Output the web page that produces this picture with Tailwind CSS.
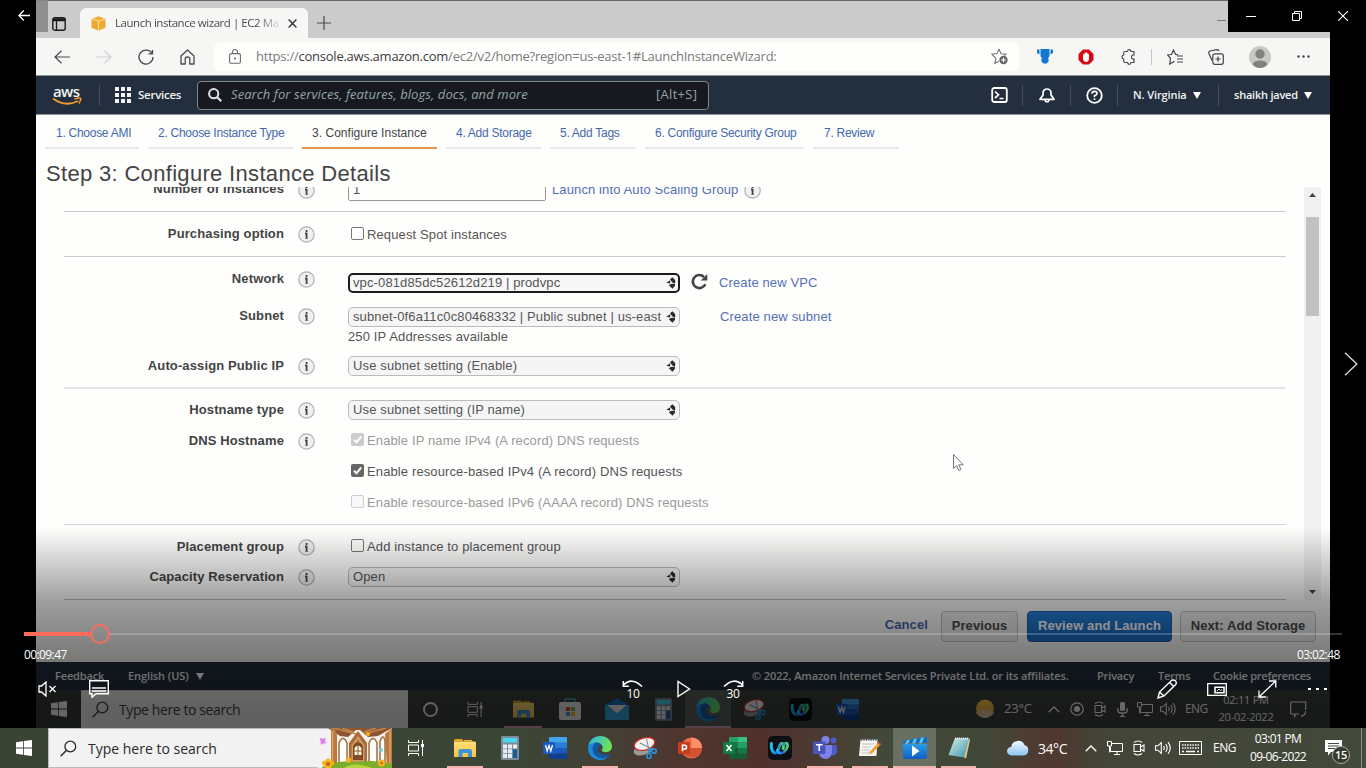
<!DOCTYPE html>
<html lang="en">
<head>
<meta charset="utf-8">
<title>Media player</title>
<script src="https://cdn.jsdelivr.net/npm/@tailwindcss/browser@4"></script>
</head>
<body class="w-[1366px] h-[768px] overflow-hidden bg-black font-['Open_Sans',sans-serif]">
<svg class="absolute w-0 h-0">
  <defs>
    <linearGradient id="gEdge" x1="0" y1="0" x2="1" y2="1"><stop offset="0" stop-color="#35c1f1"/><stop offset=".5" stop-color="#1b8bd8"/><stop offset="1" stop-color="#0c59a4"/></linearGradient>
    <linearGradient id="gEdge2" x1="0" y1="0" x2="1" y2="0.3"><stop offset="0" stop-color="#2bb5ee"/><stop offset="1" stop-color="#6be15a"/></linearGradient>
    <linearGradient id="gWx" x1="0" y1="0" x2="1" y2="0"><stop offset="0" stop-color="#19c8e8"/><stop offset=".45" stop-color="#2b5cf0"/><stop offset="1" stop-color="#4fe06b"/></linearGradient>
    <linearGradient id="gFold" x1="0" y1="0" x2="0" y2="1"><stop offset="0" stop-color="#ffe07a"/><stop offset="1" stop-color="#fbc43c"/></linearGradient>
    <linearGradient id="gMov" x1="0" y1="0" x2="0" y2="1"><stop offset="0" stop-color="#2a9bea"/><stop offset="1" stop-color="#0f5fc0"/></linearGradient>
    <linearGradient id="gCloud" x1="0" y1="0" x2="0" y2="1"><stop offset="0" stop-color="#f2f9ff"/><stop offset="1" stop-color="#8cc6f5"/></linearGradient>
    <linearGradient id="gNp" x1="0" y1="0" x2="1" y2="1"><stop offset="0" stop-color="#d5eef0"/><stop offset="1" stop-color="#3d94a8"/></linearGradient>
    <linearGradient id="gSun" x1="0" y1="0" x2="0" y2="1"><stop offset="0" stop-color="#ffd24a"/><stop offset="1" stop-color="#f59a3a"/></linearGradient>
    <symbol id="info" viewBox="0 0 17 17"><circle cx="8.500" cy="8.500" r="7.700" fill="#f0f0f0" stroke="#b0b0b0" stroke-width="1.200"/><path d="M8.600 4v2M7 7.500h1.600M8.600 6.800v6" fill="none" stroke="#444" stroke-width="1.800"/><path d="M7.200 12.500h2.900" stroke="#777" stroke-width=".8"/></symbol>
    <symbol id="arr" viewBox="0 0 10 12"><path d="M.3 5.800 4.200 3.200v3.400zM4 2.500 6.300.3 9.200 3v3H7L5.200 4zM2.800 8.300l2-1.300 4.200-.5v2.300L6.500 11.700z" fill="#2c2c2c"/></symbol>
    <symbol id="win" viewBox="0 0 16 16"><path d="M0 2.200 7 1.200v6.400H0zM7.800 1.100 16 0v7.600H7.800zM0 8.400h7v6.400l-7-1zM7.800 8.400H16V16l-8.200-1.100z" fill="#fff"/></symbol>
    <symbol id="mag" viewBox="0 0 17 17"><circle cx="10.300" cy="6.500" r="5.400" fill="none" stroke="currentColor" stroke-width="1.300"/><path d="M6.300 10.500.6 16.200" stroke="currentColor" stroke-width="1.500"/></symbol>
    <symbol id="tview" viewBox="0 0 16 16"><path d="M.5 0v2.500h10V0M.5 16v-2.500h10V16M.5 5h10v6H.5zM14.500 0v16" fill="none" stroke="#fff" stroke-width="1"/><path d="M13 4h3v3h-3z" fill="#fff"/></symbol>
    <symbol id="folder" viewBox="0 0 22 18"><path d="M0 1.500Q0 0 1.500 0H8l2 2.500H0z" fill="#e9a41f"/><path d="M0 2.500h20.500Q22 2.500 22 4v14H0z" fill="url(#gFold)"/><path d="M10 1h8v1.500h-8z" fill="#f3b833"/><path d="M4.500 18v-6Q4.500 10 6.500 10h9Q18 10 18 12v6h-4v-4H8.500v4z" fill="#3c93dc"/></symbol>
    <symbol id="calc" viewBox="0 0 18 24"><rect width="18" height="24" rx="1.500" fill="#7d8c99"/><rect x="2" y="2" width="14" height="4.500" fill="#4bd5ee"/><path d="M2 8.500h4v4H2zM7 8.500h4v4H7zM12 8.500h4v4h-4zM2 13.200h4v4H2zM7 13.200h4v4H7zM2 18h4v4H2zM7 18h4v4H7z" fill="#e9edf0"/><path d="M12 13.200h4V22h-4z" fill="#1b5c9e"/></symbol>
    <symbol id="word" viewBox="0 0 24 22"><path d="M7 0h16q1 0 1 1v5H6V1q0-1 1-1z" fill="#41a5ee"/><path d="M6 5.500h18V11H6z" fill="#2b7cd3"/><path d="M6 11h18v5.500H6z" fill="#185abd"/><path d="M6 16.500h18V21q0 1-1 1H7q-1 0-1-1z" fill="#103f91"/><rect y="5" width="12" height="12" rx="1" fill="#185abd"/><path d="m2.500 8 1.700 6L6 8.600 7.800 14l1.700-6" fill="none" stroke="#fff" stroke-width="1.300"/></symbol>
    <symbol id="xl" viewBox="0 0 24 22"><path d="M7 0h8v5.500H6V1q0-1 1-1z" fill="#21a366"/><path d="M15 0h8q1 0 1 1v4.500h-9z" fill="#33c481"/><path d="M6 5.500h9V11H6z" fill="#107c41"/><path d="M15 5.500h9V11h-9z" fill="#21a366"/><path d="M6 11h9v5.500H6zM6 16.500h18V21q0 1-1 1H7q-1 0-1-1z" fill="#185c37"/><path d="M15 11h9v5.500h-9z" fill="#107c41"/><rect y="5" width="12" height="12" rx="1" fill="#107c41"/><path d="m3.500 8 5 6M8.500 8l-5 6" stroke="#fff" stroke-width="1.600"/></symbol>
    <symbol id="ppt" viewBox="0 0 24 22"><circle cx="13.500" cy="11" r="10.500" fill="#ed6c47"/><path d="M13.500.5A10.500 10.500 0 0 1 24 11H13.500z" fill="#ff8f6b"/><path d="M3.300 11H24a10.500 10.500 0 0 1-20.500 2z" fill="#d35230"/><rect y="5" width="12" height="12" rx="1" fill="#c43e1c"/><path d="M4.500 14.300V8.300h2.200a1.800 1.800 0 0 1 0 3.700H4.500" fill="none" stroke="#fff" stroke-width="1.500"/></symbol>
    <symbol id="edge" viewBox="0 0 24 24"><path d="M0 12C0 8 4 6 8 6.500c-3 2-3.500 6-3 8.500 1 5 7 8.500 15.500 5.500A12 12 0 0 1 0 12z" fill="#1c8ad6"/><path d="M.2 10C1.500 3.500 7 0 12 0c7 0 12 5 12 10.500 0 3.500-2.700 5.700-6 5.700-2.500 0-4.800-.9-3.800-2.700C16.200 9.800 12.500 6.800 8.500 6.600 4.500 6.500 1.500 8 .2 10z" fill="url(#gEdge2)"/><path d="M8.500 6.600C4.500 8.500 3.800 13 5.500 17c2 4.500 8 7.500 15.500 3.200l1.500-2.700c-4.500 2.500-12.500 1.500-13-4C9.300 10.500 11.500 9.200 14 9.800c-1-1.800-3.300-3.100-5.500-3.200z" fill="#1159a8"/></symbol>
    <symbol id="snip" viewBox="0 0 24 22"><ellipse cx="10" cy="13" rx="9.500" ry="5" transform="rotate(-15 10 13)" fill="#9b9b9b"/><ellipse cx="11.500" cy="7" rx="10.500" ry="6" transform="rotate(-15 11.500 7)" fill="#f4f4f4" stroke="#c9302c" stroke-width="1.300"/><path d="m13.500 2 2.500 11M7 6l12 6" stroke="#888" stroke-width="1.100"/><g fill="none" stroke="#2b8fd8" stroke-width="1.700"><ellipse cx="21" cy="14" rx="2.400" ry="2" transform="rotate(20 21 14)"/><ellipse cx="16" cy="19" rx="2" ry="2.600"/><path d="m15.500 12.500 1 4M15 12l4 1.500"/></g></symbol>
    <symbol id="webex" viewBox="0 0 24 24"><rect width="24" height="24" rx="5" fill="#0d0f12"/><path d="M3.500 7.500c-1 5 1.500 9.500 4 9.500 3.500 0 3-9.500 6-9.500 2 0 2.500 2 1.500 5" fill="none" stroke="url(#gWx)" stroke-width="3" stroke-linecap="round"/><path d="M9.500 14c.5 2 2 3.500 4 3 4-.8 6.500-6 6-8.500-.4-2-3-1.500-3.500 0" fill="none" stroke="url(#gWx)" stroke-width="2.700" stroke-linecap="round"/></symbol>
    <symbol id="net" viewBox="0 0 16 14"><path d="M5 2.500h10.500v8H3.500V6M7 13.500h6M10 10.500v3M.5.500h4V5h-4zM2.500 5v6.500" fill="none" stroke="#fff" stroke-width="1"/></symbol>
    <symbol id="meet" viewBox="0 0 12 16"><path d="M1 4.500h6.500v7H1zM7.500 7 11 5v6L7.500 9.200M1 2.500q4-3 8 0M1 13.500q4 3 8 0" fill="none" stroke="#fff" stroke-width="1.100"/></symbol>
    <symbol id="vol" viewBox="0 0 17 14"><path d="M.5 4.800H3L6.300 1.500v11L3 9.200H.5zM8.500 5q1.500 2 0 4M10.700 3.200q3 3.800 0 7.600M13 1.200q4.500 5.800 0 11.600" fill="none" stroke="#fff" stroke-width="1.100"/></symbol>
    <symbol id="chev" viewBox="0 0 12 7"><path d="M.7 6.300 6 1l5.300 5.300" fill="none" stroke="#fff" stroke-width="1.300"/></symbol>
    <symbol id="tick" viewBox="0 0 13 13"><rect width="13" height="13" rx="2" fill="currentColor"/><path d="m3 6.800 2.500 2.500L10.200 3.500" fill="none" stroke="#fff" stroke-width="2"/></symbol>
  </defs>
</svg>

<div class="flex flex-col w-[1366px] h-[768px]">
<!-- Player surface -->
<main class="relative h-[728px] bg-black">

  <!-- Video frame -->
  <section class="ml-[36px] w-[1294px] h-[728px] flex flex-col bg-[#fefefd] overflow-hidden">

    <!-- Browser tabs -->
    <div class="h-[38px] shrink-0 flex bg-[#cbcbcb] border-t border-[#6b676b]">
      <div class="w-[44px] pl-4 pt-[16px]">
        <svg class="w-[14px] h-[14px]" viewBox="0 0 14 14"><rect x=".8" y=".8" width="12.400" height="12.400" rx="2" fill="none" stroke="#1a1a1a" stroke-width="1.400"/><path d="M1 2h12M1 3.500h12M4.500 3v10" stroke="#1a1a1a" stroke-width="1.300"/></svg>
      </div>
      <div class="mt-[7px] w-[228px] h-[30px] bg-[#f7f7f6] rounded-t-md flex items-center pl-[11px]">
        <svg class="w-[15px] h-[15px]" viewBox="0 0 15 15"><path d="M.5 3 7.500.3 14.500 3v8.800l-7 2.900-7-2.900z" fill="#f0a92c"/><path d="M.5 3l7 2 7-2M7.500 5v9.500" fill="none" stroke="#fbe3b3" stroke-width="1"/></svg>
        <span class="ml-[9px] w-[168px] whitespace-nowrap text-[11.500px] tracking-[-0.45px] bg-gradient-to-r from-[#444] from-84% to-[#e0e0e0] to-98% bg-clip-text text-transparent">Launch instance wizard | EC2 Ma</span>
        <svg class="w-[9px] h-[9px] ml-[5px]" viewBox="0 0 9 9"><path d="m.6.6 7.800 7.800M8.400.6.6 8.400" stroke="#333" stroke-width="1.400"/></svg>
      </div>
      <svg class="w-[14px] h-[14px] ml-[9px] mt-[15px]" viewBox="0 0 14 14"><path d="M7 0v14M0 7h14" stroke="#4a4a4a" stroke-width="1.200"/></svg>
      <div class="ml-auto mr-[104px] mt-[19px] w-[9px] h-px bg-[#777]"></div>
    </div>

    <!-- Browser toolbar -->
    <div class="h-[37px] shrink-0 flex items-center bg-[#f6f6f5] text-[#444]">
      <svg class="ml-[18px] w-[16px] h-[14px]" viewBox="0 0 16 14"><path d="M16 7H1M7.500.7 1 7l6.500 6.300" fill="none" stroke="#4a4a4a" stroke-width="1.200"/></svg>
      <svg class="ml-[26px] w-[16px] h-[14px]" viewBox="0 0 16 14"><path d="M0 7h15M8.500.7 15 7l-6.500 6.300" fill="none" stroke="#cfcfcf" stroke-width="1.200"/></svg>
      <svg class="ml-[26px] w-[16px] h-[16px]" viewBox="0 0 16 16"><path d="M14.300 5A7 7 0 1 0 15 8M10.500 4.800h4V1" fill="none" stroke="#4a4a4a" stroke-width="1.300"/></svg>
      <svg class="ml-[26px] w-[15px] h-[16px]" viewBox="0 0 15 16"><path d="M1 7 7.500 1 14 7v8H9.800v-5q0-2-2.300-2t-2.300 2v5H1z" fill="none" stroke="#4a4a4a" stroke-width="1.300" stroke-linejoin="round"/></svg>
      <div class="ml-[19px] w-[805px] h-[28px] bg-[#fefefd] rounded-md flex items-center">
        <svg class="ml-[15px] w-[12px] h-[15px]" viewBox="0 0 12 15"><rect x=".6" y="4.600" width="10.800" height="9.600" rx="1.500" fill="none" stroke="#6b6b6b" stroke-width="1.100"/><path d="M3.500 4.500V3a2.500 2.500 0 0 1 5 0v1.500" fill="none" stroke="#6b6b6b" stroke-width="1.100"/><circle cx="6" cy="9.400" r="1" fill="#555"/></svg>
        <span class="ml-[15px] mt-[1px] w-[735px] whitespace-nowrap text-[13px] tracking-[-0.235px] text-[#7a7a7a]">https://<span class="text-[#3c3c3c]">console.aws.amazon.com</span>/ec2/v2/home?region=us-east-1#LaunchInstanceWizard:</span>
        <svg class="w-[18px] h-[17px] shrink-0" viewBox="0 0 18 17"><path d="m8 1 2 4.700 5 .5-1.500 1.500M5 10.700 1 6.200l5-.6L8 1M5 10.700 3.800 15.500l4-2.200" fill="none" stroke="#777" stroke-width="1.100"/><circle cx="12.500" cy="12" r="4.200" fill="#666"/><path d="M12.500 9.700v4.600M10.200 12h4.600" stroke="#fff" stroke-width="1.200"/></svg>
      </div>
      <svg class="ml-[18px] w-[16px] h-[16px]" viewBox="0 0 16 16"><path d="M3.500 0h9v6.500q0 1.500-1.500 2.500a3.600 3.600 0 1 1-6 0Q3.500 8 3.500 6.500zM0 .5h2.500v5L0 4zM13.500.5H16V4l-2.500 1.500z" fill="#1378d3"/></svg>
      <svg class="ml-[25px] w-[16px] h-[16px]" viewBox="0 0 16 16"><path d="M5 .5h6L15.500 5v6L11 15.500H5L.5 11V5z" fill="#d7090f"/><path d="M5 8V5.500q.8-1 1.500 0V4q.8-1 1.500 0v-.3q.9-.8 1.500.2V5q1-.7 1.400.3v5Q10.500 13 8 13q-1.800 0-3-2.500z" fill="#fff"/></svg>
      <svg class="ml-[27px] w-[15px] h-[16px]" viewBox="0 0 15 16"><path d="M4 2.500h2.500q.2-1.800 1.800-1.800t1.700 1.800h3V6q-2.500-.3-2.500 2t2.500 2v3.500h-3q-.3 1.800-1.700 1.800t-1.800-1.800H4q-1.300 0-1.300-1.500V10Q1 9.700 1 8t1.700-2V4Q2.700 2.500 4 2.500z" fill="none" stroke="#4a4a4a" stroke-width="1.200"/></svg>
      <div class="ml-[15px] w-px h-[16px] bg-[#c4c4c4]"></div>
      <svg class="ml-[15px] w-[16px] h-[16px]" viewBox="0 0 16 16"><path d="m11 5.700-2.500-.3L6.500 1l-2 4.500-4 .5 3 3.300L2.700 15l4.800-2.800M10 7h6M10 10h6M10 13h6" fill="none" stroke="#444" stroke-width="1.200"/></svg>
      <svg class="ml-[25px] w-[16px] h-[16px]" viewBox="0 0 16 16"><rect x="4.800" y="4.800" width="10.500" height="10.500" rx="2" fill="none" stroke="#444" stroke-width="1.200"/><path d="M10 7.500v5.200M7.400 10h5.200M4 11.500.8 4.200Q.5 2.500 2 2l7-1.400q1.700 0 2 1.500" fill="none" stroke="#444" stroke-width="1.200"/></svg>
      <svg class="ml-[25px] w-[22px] h-[22px]" viewBox="0 0 22 22"><circle cx="11" cy="11" r="11" fill="#c9c8c6"/><circle cx="11" cy="8" r="4.700" fill="#83817f"/><path d="M3.500 18.500Q5 14.500 11 14.500t7.500 4Q15 22 11 22t-7.500-3.500z" fill="#83817f"/></svg>
      <svg class="ml-[26px] w-[13px] h-[3px]" viewBox="0 0 13 3"><circle cx="1.500" cy="1.500" r="1.200" fill="#444"/><circle cx="6.500" cy="1.500" r="1.200" fill="#444"/><circle cx="11.500" cy="1.500" r="1.200" fill="#444"/></svg>
    </div>

    <!-- AWS navigation -->
    <div class="h-[40px] shrink-0 flex items-center bg-[#232f3e] border-t border-b border-[#8b9394] text-[11.500px] font-semibold text-[#f2f3f3] whitespace-nowrap">
      <div class="ml-[16px] w-[47px] flex flex-col">
        <span class="text-[15px] leading-[12px] font-semibold tracking-[-0.6px] pl-[1px]">aws</span>
        <svg class="w-[30px] h-[9px]" viewBox="0 0 30 9"><path d="M1 1.500Q13 10.500 26 4" fill="none" stroke="#f39a2d" stroke-width="1.800"/><path d="M22.500 2q6-1.800 6.200-.6.200 2.600-2 5.200" fill="none" stroke="#f39a2d" stroke-width="1.500"/></svg>
      </div>
      <div class="w-px h-[21px] bg-[#45505c]"></div>
      <svg class="ml-[15px] w-[16px] h-[16px]" viewBox="0 0 16 16"><path d="M0 0h4v4H0zM6 0h4v4H6zM12 0h4v4h-4zM0 6h4v4H0zM6 6h4v4H6zM12 6h4v4h-4zM0 12h4v4H0zM6 12h4v4H6zM12 12h4v4h-4z" fill="#f2f3f3"/></svg>
      <span class="ml-[7px] w-[59px] tracking-[-0.25px]">Services</span>
      <div class="w-[512px] h-[29px] border border-[#7f8787] rounded-sm bg-[#16191f] flex items-center text-[#95a5a6] text-[13px] font-medium">
        <svg class="ml-[10px] w-[14px] h-[14px]" viewBox="0 0 14 14"><circle cx="5.700" cy="5.700" r="4.600" fill="none" stroke="#dfe3e3" stroke-width="2"/><path d="m9 9 4.200 4.200" stroke="#dfe3e3" stroke-width="2.200"/></svg>
        <span class="ml-[9px] italic w-[425px] tracking-[0.08px]">Search for services, features, blogs, docs, and more</span>
        <span class="text-[13px] tracking-[0.3px]">[Alt+S]</span>
      </div>
      <svg class="ml-[282px] w-[17px] h-[16px]" viewBox="0 0 17 16"><rect x="1.200" y="1" width="14.600" height="14" rx="2" fill="none" stroke="#fff" stroke-width="1.800"/><path d="m4 4.500 3.500 3.300L4 11M8.500 11.500h4" fill="none" stroke="#fff" stroke-width="1.700"/></svg>
      <div class="ml-[14px] w-px h-[21px] bg-[#45505c]"></div>
      <svg class="ml-[16px] w-[16px] h-[16px]" viewBox="0 0 16 16"><path d="M1 12.300 4 8V6a4 4 0 0 1 8 0v2l3 4.300z" fill="none" stroke="#fff" stroke-width="1.700" stroke-linejoin="round"/><path d="M6 12.500a2 2.300 0 0 0 4 0" fill="none" stroke="#fff" stroke-width="1.600"/></svg>
      <div class="ml-[15px] w-px h-[21px] bg-[#45505c]"></div>
      <svg class="ml-[15px] w-[17px] h-[17px]" viewBox="0 0 17 17"><circle cx="8.500" cy="8.500" r="7.300" fill="none" stroke="#fff" stroke-width="1.800"/><path d="M6 6.800q0-2.400 2.500-2.400T11 6.500Q11 8 8.500 8.800v1.400M8.500 11.500v1.600" fill="none" stroke="#fff" stroke-width="1.700"/></svg>
      <div class="ml-[14px] w-px h-[21px] bg-[#45505c]"></div>
      <span class="ml-[15px] w-[60px] text-[11px] tracking-[-0.1px]">N. Virginia</span>
      <svg class="w-[8px] h-[7px]" viewBox="0 0 8 7"><path d="M0 0h8L4 7z" fill="#fff"/></svg>
      <div class="ml-[17px] w-px h-[21px] bg-[#45505c]"></div>
      <span class="ml-[15px] w-[70px] text-[11px] tracking-[-0.22px]">shaikh javed</span>
      <svg class="w-[8px] h-[7px]" viewBox="0 0 8 7"><path d="M0 0h8L4 7z" fill="#fff"/></svg>
    </div>

    <!-- Wizard steps -->
    <div class="h-[34px] shrink-0 flex gap-[9px] pl-[9px] font-['Liberation_Sans',sans-serif] text-[12px] leading-[37px] text-[#4468ad] whitespace-nowrap tracking-[-0.27px]">
      <div class="w-[94px] pl-[11px] border-b-2 border-[#e9e9e9]">1. Choose AMI</div>
      <div class="w-[145px] pl-[10px] border-b-2 border-[#e9e9e9]">2. Choose Instance Type</div>
      <div class="w-[135px] pl-[10px] border-b-2 border-[#e8974a] text-[#444] tracking-[0.03px]">3. Configure Instance</div>
      <div class="w-[95px] pl-[10px] border-b-2 border-[#e9e9e9]">4. Add Storage</div>
      <div class="w-[86px] pl-[10px] border-b-2 border-[#e9e9e9]">5. Add Tags</div>
      <div class="w-[159px] pl-[10px] border-b-2 border-[#e9e9e9]">6. Configure Security Group</div>
      <div class="w-[86px] pl-[11px] border-b-2 border-[#e9e9e9]">7. Review</div>
    </div>

    <!-- Instance details form -->
    <div class="h-[38px] shrink-0 relative z-10 pl-[10px] pt-[10px] font-['Liberation_Sans',sans-serif] text-[22px] leading-[30px] tracking-[0.32px] text-[#444] whitespace-nowrap">Step 3: Configure Instance Details</div>
    <div class="h-[413px] shrink-0 flex overflow-hidden font-['Liberation_Sans',sans-serif] text-[13px] text-[#555] whitespace-nowrap">
      <div class="ml-[28px] w-[1222px] flex flex-col">
        <div class="h-[6px] flex items-center">
          <div class="w-[220px] text-right font-bold tracking-[0.12px] text-[#444] pb-[2px]">Number of instances</div>
          <svg class="ml-[14px] w-[17px] h-[17px] shrink-0"><use href="#info"/></svg>
          <div class="ml-[33px] w-[198px] h-[22px] shrink-0 mb-[1px] border border-[#999] rounded-[2px] pl-[4px] leading-[20px]">1</div>
          <span class="ml-[6px] w-[192px] text-[#5470b4] tracking-[0.12px]">Launch into Auto Scaling Group</span>
          <svg class="w-[17px] h-[17px] shrink-0"><use href="#info"/></svg>
        </div>
        <div class="h-[18px]"></div>
        <div class="h-px shrink-0 bg-[#ccc]"></div>
        <div class="h-[44px] shrink-0 flex items-center">
          <div class="w-[220px] text-right font-bold tracking-[0.12px] text-[#444]">Purchasing option</div>
          <svg class="ml-[14px] w-[17px] h-[17px]"><use href="#info"/></svg>
          <div class="ml-[36px] mb-[2px] w-[13px] h-[13px] border border-[#777] rounded-[2px] bg-white"></div>
          <span class="ml-[3px] mt-[2px] tracking-[0.12px]">Request Spot instances</span>
        </div>
        <div class="h-px shrink-0 bg-[#ccc]"></div>
        <div class="h-[45px] shrink-0 flex items-center">
          <div class="w-[220px] text-right font-bold tracking-[0.12px] text-[#444] pb-[2px]">Network</div>
          <svg class="ml-[14px] w-[17px] h-[17px]"><use href="#info"/></svg>
          <div class="ml-[33px] mt-[7px] w-[332px] h-[20px] border-2 border-[#1c1c1c] rounded-[5px] bg-[#f7f7f7] flex items-center justify-between pl-[3px] pr-[2px] tracking-[0.12px]"><span>vpc-081d85dc52612d219 | prodvpc</span><svg class="w-[10px] h-[12px]"><use href="#arr"/></svg></div>
          <svg class="ml-[11px] mt-[3px] w-[17px] h-[17px]" viewBox="0 0 17 17"><path d="M14.300 11.200A6.500 6.500 0 1 1 13 4" fill="none" stroke="#444" stroke-width="2.600"/><path d="M16.300 1v6.500H9.800z" fill="#444"/></svg>
          <span class="ml-[11px] mt-[7px] text-[#5470b4] tracking-[0.12px]">Create new VPC</span>
        </div>
        <div class="h-[29px] shrink-0 flex items-center">
          <div class="w-[220px] text-right font-bold tracking-[0.12px] text-[#444] pb-px">Subnet</div>
          <svg class="ml-[14px] w-[17px] h-[17px]"><use href="#info"/></svg>
          <div class="ml-[33px] w-[332px] h-[20px] border border-[#bbb] rounded-[5px] bg-[#f5f5f5] flex items-center justify-between pl-[4px] pr-[3px] tracking-[0.12px]"><span>subnet-0f6a11c0c80468332 | Public subnet | us-east</span><svg class="w-[10px] h-[12px]"><use href="#arr"/></svg></div>
          <span class="ml-[40px] text-[#5470b4] tracking-[0.14px]">Create new subnet</span>
        </div>
        <div class="h-[12px] shrink-0 flex items-center pl-[284px] tracking-[0.14px]">250 IP Addresses available</div>
        <div class="h-[45px] shrink-0 flex items-center">
          <div class="w-[220px] text-right font-bold tracking-[0.12px] text-[#444] pt-px">Auto-assign Public IP</div>
          <svg class="ml-[14px] mt-[2px] w-[17px] h-[17px]"><use href="#info"/></svg>
          <div class="ml-[33px] mt-px w-[332px] h-[20px] border border-[#bbb] rounded-[5px] bg-[#f5f5f5] flex items-center justify-between pl-[4px] pr-[3px] tracking-[0.14px]"><span>Use subnet setting (Enable)</span><svg class="w-[10px] h-[12px]"><use href="#arr"/></svg></div>
        </div>
        <div class="-mt-px h-[2px] shrink-0 bg-[#e4e4e4]"></div>
        <div class="h-[42px] shrink-0 flex items-center">
          <div class="w-[220px] text-right font-bold tracking-[0.12px] text-[#444]">Hostname type</div>
          <svg class="ml-[14px] mt-px w-[17px] h-[17px]"><use href="#info"/></svg>
          <div class="ml-[33px] w-[332px] h-[20px] border border-[#bbb] rounded-[5px] bg-[#f5f5f5] flex items-center justify-between pl-[4px] pr-[3px] tracking-[0.14px]"><span>Use subnet setting (IP name)</span><svg class="w-[10px] h-[12px]"><use href="#arr"/></svg></div>
        </div>
        <div class="h-[19px] shrink-0 flex items-center">
          <div class="w-[220px] text-right font-bold tracking-[0.12px] text-[#444]">DNS Hostname</div>
          <svg class="ml-[14px] mt-[1px] w-[17px] h-[17px]"><use href="#info"/></svg>
          <svg class="ml-[36px] mb-[2px] w-[13px] h-[13px] text-[#ccc]"><use href="#tick"/></svg>
          <span class="ml-[3px] mt-px tracking-[0.12px] text-[#9a9a9a]">Enable IP name IPv4 (A record) DNS requests</span>
        </div>
        <div class="h-[43px] shrink-0 flex items-center pl-[287px]">
          <svg class="mb-[2px] w-[13px] h-[13px] text-[#666]"><use href="#tick"/></svg>
          <span class="ml-[3px] mt-px tracking-[0.12px]">Enable resource-based IPv4 (A record) DNS requests</span>
        </div>
        <div class="h-[18px] shrink-0 flex items-center pl-[287px]">
          <div class="mb-[2px] w-[13px] h-[13px] border border-[#ccc] rounded-[2px] bg-[#f8f8f8]"></div>
          <span class="ml-[3px] mt-[2px] tracking-[0.12px] text-[#9a9a9a]">Enable resource-based IPv6 (AAAA record) DNS requests</span>
        </div>
        <div class="h-[13px] shrink-0"></div>
        <div class="h-px shrink-0 bg-[#d4d4d4]"></div>
        <div class="h-[43px] shrink-0 flex items-center">
          <div class="w-[220px] text-right font-bold tracking-[0.12px] text-[#444] pt-px">Placement group</div>
          <svg class="ml-[14px] mt-[1px] w-[17px] h-[17px]"><use href="#info"/></svg>
          <div class="ml-[36px] mb-[2px] w-[13px] h-[13px] border border-[#777] rounded-[2px]"></div>
          <span class="ml-[3px] mt-px tracking-[0.12px]">Add instance to placement group</span>
        </div>
        <div class="h-[17px] shrink-0 flex items-center">
          <div class="w-[220px] text-right font-bold tracking-[0.12px] text-[#444]">Capacity Reservation</div>
          <svg class="ml-[14px] mt-[2px] w-[17px] h-[17px] shrink-0"><use href="#info"/></svg>
          <div class="ml-[33px] shrink-0 w-[332px] h-[20px] border border-[#bbb] rounded-[5px] bg-[#f5f5f5] flex items-center justify-between pl-[4px] pr-[3px] tracking-[0.12px]"><span>Open</span><svg class="w-[10px] h-[12px]"><use href="#arr"/></svg></div>
        </div>
        <div class="h-[14px] shrink-0"></div>
        <div class="h-px shrink-0 bg-[#bbb]"></div>
      </div>
      <div class="ml-[18px] w-[17px] bg-[#f0f0f0] flex flex-col items-center">
        <svg class="mt-[6px] w-[7px] h-[4px]" viewBox="0 0 7 4"><path d="M0 4h7L3.500 0z" fill="#444"/></svg>
        <div class="mt-[20px] w-[13px] h-[99px] bg-[#c1c1bf]"></div>
        <svg class="mt-auto mb-[6px] w-[7px] h-[4px]" viewBox="0 0 7 4"><path d="M0 0h7L3.500 4z" fill="#444"/></svg>
      </div>
    </div>

    <!-- Wizard actions -->
    <div class="h-[62px] shrink-0 flex justify-end items-start pt-[11px] pr-[14px] bg-[#fbfbfa] font-['Liberation_Sans',sans-serif] text-[13px] leading-[28px] font-bold text-[#4a4a4a] text-center whitespace-nowrap tracking-[0.1px]">
      <span class="mr-[13px] text-[#4468ad]">Cancel</span>
      <div class="w-[77px] h-[31px] border border-[#c0c0c0] rounded-[4px] bg-[#eee]">Previous</div>
      <div class="ml-[9px] w-[145px] h-[31px] border border-[#1b5da8] rounded-[4px] bg-gradient-to-b from-[#2480d8] to-[#1a6ac0] text-white">Review and Launch</div>
      <div class="ml-[8px] w-[136px] h-[31px] border border-[#c0c0c0] rounded-[4px] bg-[#eee]">Next: Add Storage</div>
    </div>

    <!-- AWS footer -->
    <div class="h-[28px] shrink-0 flex items-center bg-[#232f3e] text-[11px] font-semibold text-[#f2f3f3] whitespace-nowrap tracking-[-0.15px]">
      <span class="ml-[19px] w-[73px]">Feedback</span>
      <span class="w-[68px] tracking-[-0.1px]">English (US)</span>
      <svg class="w-[8px] h-[7px]" viewBox="0 0 8 7"><path d="M0 0h8L4 7z" fill="#fff"/></svg>
      <span class="ml-[548px] w-[345px] tracking-[-0.11px]">© 2022, Amazon Internet Services Private Ltd. or its affiliates.</span>
      <span class="w-[61px]">Privacy</span>
      <span class="w-[55px]">Terms</span>
      <span class="tracking-[-0.25px]">Cookie preferences</span>
    </div>

    <!-- Recorded taskbar -->
    <div class="h-[38px] shrink-0 flex items-center bg-[#3a413c] text-white whitespace-nowrap">
      <div class="w-[45px] h-full bg-[#343b37] flex items-center justify-center"><svg class="w-[16px] h-[16px]"><use href="#win"/></svg></div>
      <div class="w-[327px] h-full bg-[#f2f2f1] border-t border-[#ccc] flex items-center text-[#444]">
        <svg class="ml-[11px] w-[17px] h-[17px]"><use href="#mag"/></svg>
        <span class="ml-[10px] text-[14px] tracking-[-0.4px]">Type here to search</span>
      </div>
      <div class="w-[44px] flex justify-center"><div class="w-[15px] h-[15px] rounded-full border-2 border-[#eee]"></div></div>
      <div class="w-[46px] flex justify-center"><svg class="w-[16px] h-[15px]"><use href="#tview"/></svg></div>
      <div class="w-[50px] h-full flex flex-col items-center"><svg class="mt-[10px] w-[21px] h-[18px]"><use href="#folder"/></svg><div class="mt-auto w-[38px] h-[2px] bg-[#d8a0b8]"></div></div>
      <div class="w-[44px] flex justify-center"><svg class="w-[22px] h-[22px]" viewBox="0 0 22 22"><path d="M6 4V1h10v3" fill="none" stroke="#3ca0b8" stroke-width="1.500"/><rect y="4" width="22" height="18" rx="2" fill="#eee"/><path d="M7 9h4v4H7z" fill="#e2492f"/><path d="M12 9h4v4h-4z" fill="#7ab648"/><path d="M7 14h4v4H7z" fill="#3b9be0"/><path d="M12 14h4v4h-4z" fill="#f5b82e"/></svg></div>
      <div class="w-[50px] flex justify-center"><svg class="w-[24px] h-[22px]" viewBox="0 0 24 22"><path d="M0 7 12 0l12 7v3H0z" fill="#1473c8"/><path d="M2 7h20l-10 9z" fill="#f1f1f1"/><path d="M0 7l12 8 12-8v15H0z" fill="#35a8e6"/></svg></div>
      <div class="w-[43px] flex justify-center"><svg class="w-[17px] h-[23px]"><use href="#calc"/></svg></div>
      <div class="w-[46px] h-full bg-[#5b605c] flex flex-col items-center"><svg class="mt-[7px] w-[24px] h-[24px]"><use href="#edge"/></svg><div class="mt-auto w-full h-[2px] bg-[#d8a0b8]"></div></div>
      <div class="w-[47px] flex justify-center"><svg class="w-[23px] h-[21px]"><use href="#snip"/></svg></div>
      <div class="w-[45px] flex justify-center"><svg class="w-[23px] h-[23px]"><use href="#webex"/></svg></div>
      <div class="w-[48px] flex justify-center"><svg class="w-[23px] h-[21px]"><use href="#word"/></svg></div>
      <svg class="ml-[104px] w-[20px] h-[20px]" viewBox="0 0 20 20"><circle cx="10" cy="9.500" r="9" fill="url(#gSun)"/><path d="M1 14q1-3 4-2 3-4 6 0 6-2 8 2-4 5-9 5T1 14z" fill="#e8c8a0"/></svg>
      <span class="ml-[9px] w-[44px] text-[13px] tracking-[-0.2px]">23°C</span>
      <svg class="w-[12px] h-[7px]"><use href="#chev"/></svg>
      <svg class="ml-[10px] w-[14px] h-[14px]" viewBox="0 0 14 14"><circle cx="7" cy="7" r="6.200" fill="none" stroke="#fff" stroke-width="1.200"/><circle cx="7" cy="7" r="3" fill="#fff"/></svg>
      <svg class="ml-[10px] w-[12px] h-[16px]"><use href="#meet"/></svg>
      <svg class="ml-[11px] w-[11px] h-[15px]" viewBox="0 0 11 15"><rect x="3" y="0" width="5" height="9" rx="1.500" fill="#fff"/><path d="M.8 6v2q0 3 3 3h3.400q3 0 3-3V6M5.500 11v3.500M3 14.500h5" fill="none" stroke="#fff" stroke-width="1.300"/></svg>
      <svg class="ml-[9px] w-[16px] h-[14px]"><use href="#net"/></svg>
      <svg class="ml-[7px] w-[17px] h-[14px]"><use href="#vol"/></svg>
      <span class="ml-[8px] w-[30px] text-[12px] tracking-[-0.6px]">ENG</span>
      <div class="w-[62px] text-center text-[11px] leading-[17px] tracking-[-0.25px] pb-[2px]">02:11 PM<br>20-02-2022</div>
      <svg class="ml-[13px] w-[17px] h-[17px]" viewBox="0 0 17 17"><path d="M.7 1h15v8M9 13H6l-1.500 2.500V13H.7V1" fill="none" stroke="#fff" stroke-width="1.200"/><path d="M11 15a4 4 0 0 0 4.500-5A4.500 4.500 0 0 1 11 15z" fill="#fff" stroke="#fff"/></svg>
    </div>
  </section>

  <!-- Mouse pointer in the recording -->
  <svg class="absolute left-[952px] top-[453px] w-[12px] h-[19px]" viewBox="0 0 12 19"><path d="M1.500 1.500v14l3.200-3 2 5 2.200-1-2-4.700h4.300z" fill="#fff" stroke="#777" stroke-width="1"/></svg>

  <!-- Player overlay -->
  <div class="absolute left-[36px] top-[528px] w-[1294px] h-[200px] bg-[linear-gradient(to_bottom,rgba(0,0,0,0)_0%,rgba(0,0,0,.17)_16%,rgba(0,0,0,.37)_36%,rgba(0,0,0,.52)_66%,rgba(0,0,0,.6)_90%,rgba(0,0,0,.6)_100%)]"></div>
  <div class="absolute left-0 top-0 w-[48px] h-[32px] bg-[#888]/90"></div>
  <div class="absolute left-0 top-0 w-[36px] h-[32px] bg-black"></div>
  <svg class="absolute left-[18px] top-[10px] w-[12px] h-[11px]" viewBox="0 0 12 11"><path d="M12 5.500H.8M5.800.5l-5 5 5 5" fill="none" stroke="#fff" stroke-width="1.300"/></svg>
  <div class="absolute left-[1228px] top-0 w-[138px] h-[32px] bg-black flex items-center">
    <div class="ml-[18px] w-[10px] h-px bg-white"></div>
    <svg class="ml-[36px] w-[10px] h-[10px]" viewBox="0 0 10 10"><path d="M.5 2.500h7v7h-7zM2.500 2.500v-2h7v7h-2" fill="none" stroke="#fff" stroke-width="1"/></svg>
    <svg class="ml-[36px] w-[10px] h-[10px]" viewBox="0 0 10 10"><path d="m0 0 10 10M10 0 0 10" stroke="#fff" stroke-width="1.100"/></svg>
  </div>
  <svg class="absolute left-[1344px] top-[352px] w-[14px] h-[24px]" viewBox="0 0 14 24"><path d="m1 .7 11.800 11.300L1 23.300" fill="none" stroke="#d0d0d0" stroke-width="1.500"/></svg>

  <div class="absolute left-[110px] top-[633px] w-[1232px] h-[2px] bg-white/20"></div>
  <div class="absolute left-[24px] top-[632px] w-[67px] h-[4px] bg-[#ff6b5a]"></div>
  <div class="absolute left-[90px] top-[624px] w-[20px] h-[20px] rounded-full border-2 border-[#ff6b5a]"></div>
  <div class="absolute left-[24px] top-[646px] text-[12px] leading-[17px] tracking-[-0.6px] text-white whitespace-nowrap">00:09:47</div>
  <div class="absolute left-[1297px] top-[646px] text-[12px] leading-[17px] tracking-[-0.6px] text-white whitespace-nowrap">03:02:48</div>

  <svg class="absolute left-[38px] top-[681px] w-[19px] h-[16px]" viewBox="0 0 19 16"><path d="M1 5h2.500L8 1v14l-4.500-4H1z" fill="none" stroke="#fff" stroke-width="1.300"/><path d="m11.500 5 6 6M17.500 5l-6 6" stroke="#fff" stroke-width="1.300"/></svg>
  <svg class="absolute left-[89px] top-[680px] w-[20px] h-[18px]" viewBox="0 0 20 18"><path d="M.7.7h18.600v13H7l-4 3.600v-3.600H.7z" fill="none" stroke="#fff" stroke-width="1.400"/><path d="M3 8h14M3 11h14" stroke="#fff" stroke-width="1.600"/></svg>
  <svg class="absolute left-[622px] top-[679px] w-[22px] h-[9px]" viewBox="0 0 22 9"><path d="M1.500 6Q10-2.500 20 7.500M1.300 2v5.200h5.500" fill="none" stroke="#fff" stroke-width="1.500"/></svg>
  <div class="absolute left-[622px] top-[686px] w-[22px] text-center text-[12px] leading-[15px] tracking-[-0.4px] text-white">10</div>
  <svg class="absolute left-[677px] top-[680px] w-[14px] h-[18px]" viewBox="0 0 14 18"><path d="M1 1.500v15L12.500 9z" fill="none" stroke="#fff" stroke-width="1.400"/></svg>
  <svg class="absolute left-[722px] top-[679px] w-[22px] h-[9px]" viewBox="0 0 22 9"><path d="M20.500 6Q12-2.500 2 7.500M20.700 2v5.200h-5.500" fill="none" stroke="#fff" stroke-width="1.500"/></svg>
  <div class="absolute left-[722px] top-[686px] w-[22px] text-center text-[12px] leading-[15px] tracking-[-0.4px] text-white">30</div>
  <svg class="absolute left-[1157px] top-[679px] w-[21px] h-[20px]" viewBox="0 0 21 20"><path d="m1 19 1.500-6L14.500 1.500q2-1.300 3.800.3t.4 3.700L7 17zM12.500 3.500l4.300 4M2.500 13l4.500 4" fill="none" stroke="#fff" stroke-width="1.400"/></svg>
  <svg class="absolute left-[1207px] top-[683px] w-[20px] h-[13px]" viewBox="0 0 20 13"><path d="M.7.7h18.600v11.600H.7z" fill="none" stroke="#fff" stroke-width="1.300"/><path d="M8 4.200h9v5.500H8z" fill="none" stroke="#fff" stroke-width="1.600"/><path d="M10 8l2-2 1.500 1.500L15 6.500" fill="none" stroke="#fff"/></svg>
  <svg class="absolute left-[1258px] top-[680px] w-[19px] h-[18px]" viewBox="0 0 19 18"><path d="M1.200 16.800 17.500 1.200M11 1h6.800v6.500M1 10.500V17h6.800" fill="none" stroke="#fff" stroke-width="1.300"/></svg>
  <svg class="absolute left-[1308px] top-[687px] w-[19px] h-[4px]" viewBox="0 0 19 4"><path d="M0 1h3v2H0zM8 1h3v2H8zM16 1h3v2h-3z" fill="#fff"/></svg>
</main>

<!-- Desktop taskbar -->
<footer class="h-[40px] flex items-center text-white whitespace-nowrap bg-[linear-gradient(90deg,#3a4435_0%,#3c4637_38%,#453f35_45%,#503530_50%,#4f302d_56%,#4a3b33_60%,#434838_64%,#414838_72%,#4c3e35_75%,#50372f_77%,#444538_81%,#424a3a_100%)]">
  <div class="w-[48px] flex justify-center"><svg class="w-[16px] h-[16px]"><use href="#win"/></svg></div>
  <div class="w-[270px] h-[40px] bg-[#f2f2f2] border border-[#bbb] border-r-0 flex items-center text-[#2a2a2a]">
    <svg class="ml-[11px] w-[17px] h-[17px]"><use href="#mag"/></svg>
    <span class="ml-[11px] w-[225px] text-[14px] tracking-[0px]">Type here to search</span>
  </div>
  <svg class="w-[74px] h-[40px] bg-[#f2f2f2]" viewBox="-4 0 74 40">
    <path d="M-4 .5h14" stroke="#bbb"/>
    <path d="M12 0h58v40H12z" fill="#f6f1ea"/>
    <path d="M6 0h64L56 8 46 9l-8-7h-4l-8 7-8-1z" fill="#8d5632"/><path d="M12 0 34 6M64 0 42 6M20 0l12 4M54 0 42 4" stroke="#c08650" stroke-width="1.500"/>
    <path d="M9 0h3q3 3 3 8v32H9zM63 6l7-6v40h-5z" fill="#b9783f"/><path d="M10.500 3v37M68 2v38" stroke="#dda466" stroke-width="1.500"/>
    <path d="M17 36V15q4-9 8 0v21zM47 36V15q4-9 8 0v21zM58 36V13q3.500-8 5 0v23z" fill="#fdfdfb" stroke="#a06c40" stroke-width="1.500"/>
    <path d="M27 36V15l9-12 9 12v21z" fill="#a86a3a"/><path d="M29.500 34V17L36 8l6.500 9v17z" fill="#cf9a62"/><path d="M31 32V18q5-8 10 0v14z" fill="#7c4a26"/><path d="M32.500 27V20q3.500-5 7 0v7z" fill="#fff6e4"/><path d="M36 12v18M32 23h8" stroke="#8d5830" stroke-width="1.100"/>
    <path d="M0 39q18-8 35-5 18-3 35 2v4H0z" fill="#7cad2a"/><path d="M22 40q10-7 28 0z" fill="#b4d33c"/>
    <g fill="#f7b31c"><circle cx="2.500" cy="35" r="2.500"/><circle cx="9.500" cy="35" r="2.500"/><circle cx="6" cy="33" r="2.500"/><circle cx="6" cy="38" r="3.500"/><circle cx="26.500" cy="32" r="2.700"/><circle cx="59.500" cy="35" r="3.500"/><circle cx="46" cy="6" r="2"/></g><circle cx="6" cy="36" r="2" fill="#c4621a"/><circle cx="59.500" cy="35" r="1.300" fill="#c4621a"/>
    <path d="M-2.500 9.500 1 11l2.500-1.500L3 13l1.500 2.500-3-.3L-1 17l-.3-3.500z" fill="#e07cf0"/>
    <circle cx="59" cy="22" r="2" fill="#6fd0de"/>
  </svg>
  <div class="ml-[2px] w-[43px] flex justify-center"><svg class="w-[16px] h-[16px]"><use href="#tview"/></svg></div>
  <div class="ml-[5px] w-[45px] h-full flex flex-col items-center"><svg class="mt-[11px] w-[22px] h-[18px]"><use href="#folder"/></svg><div class="mt-auto w-[36px] h-[2px] bg-[#f5b3ae]"></div></div>
  <div class="w-[45px] flex justify-center"><svg class="w-[18px] h-[24px]"><use href="#calc"/></svg></div>
  <div class="w-[45px] flex justify-center"><svg class="w-[24px] h-[22px]"><use href="#word"/></svg></div>
  <div class="w-[45px] h-full flex flex-col items-center"><svg class="mt-[8px] w-[24px] h-[24px]"><use href="#edge"/></svg><div class="mt-auto w-[36px] h-[2px] bg-[#f5b3ae]"></div></div>
  <div class="w-[45px] flex justify-center"><svg class="w-[24px] h-[22px]"><use href="#snip"/></svg></div>
  <div class="w-[45px] flex justify-center"><svg class="w-[24px] h-[22px]"><use href="#ppt"/></svg></div>
  <div class="w-[45px] flex justify-center"><svg class="w-[24px] h-[22px]"><use href="#xl"/></svg></div>
  <div class="w-[45px] flex justify-center"><svg class="w-[24px] h-[24px]"><use href="#webex"/></svg></div>
  <div class="w-[45px] h-full flex flex-col items-center"><svg class="mt-[8px] w-[24px] h-[23px]" viewBox="0 0 24 23"><circle cx="20.500" cy="4.500" r="2.900" fill="#5059c9"/><circle cx="12.500" cy="4" r="4" fill="#7b83eb"/><path d="M17 9h7v6.500a4 4 0 0 1-6 3.300z" fill="#5059c9"/><path d="M6 9h13v7.500a6.500 6.500 0 0 1-13 0z" fill="#7b83eb"/><rect y="5.500" width="12.500" height="12.500" rx="1" fill="#4b53bc"/><path d="M3 8.700h6.500M6.250 8.700V15" stroke="#fff" stroke-width="1.600"/></svg><div class="mt-auto w-[36px] h-[2px] bg-[#f5b3ae]"></div></div>
  <div class="w-[45px] h-full flex flex-col items-center"><svg class="mt-[10px] w-[22px] h-[19px]" viewBox="0 0 22 19"><path d="M1.500 1.500h17L17.500 18H0z" fill="#f4f4f2"/><path d="M2 1.500h16" stroke="#555" stroke-width="2.500" stroke-dasharray="1.200 1.200"/><path d="M3 6h12M3 9h9M2.500 12h8M2.500 15h10" stroke="#bcbcbc" stroke-width=".9"/><path d="m11 13.500 8.500-9.300 2.300 2L13.500 15l-3.500 1z" fill="#f0a030"/><path d="m18.500 5.200 1-1.200q1.300-.3 2.300 1.800l-1 1.300z" fill="#d8443a"/></svg><div class="mt-auto w-[36px] h-[2px] bg-[#f5b3ae]"></div></div>
  <div class="w-[43px] ml-[1px] h-full flex flex-col items-center bg-[#687064]"><svg class="mt-[9px] w-[24px] h-[22px]" viewBox="0 0 24 22"><path d="M0 4 22 0q2 0 2 2v4H0z" fill="#0d6fc4"/><path d="m4 3.300 3-.5-2 4H2zM11 2l3-.5-2 5H9zM18 .8l3-.5-2 6h-3z" fill="#5cc4f5"/><path d="M0 7h24v13q0 2-2 2H2q-2 0-2-2z" fill="url(#gMov)"/><path d="M9 8.500v11l7.500-5.500z" fill="#fff"/></svg><div class="mt-auto w-full h-[2px] bg-[#f5b3ae]"></div></div>
  <div class="w-[45px] h-full flex flex-col items-center"><svg class="mt-[9px] w-[24px] h-[22px]" viewBox="0 0 24 22"><path d="M8 1h14l-5 19.500L1.500 18z" fill="url(#gNp)"/><path d="M22 1l1 2-4 18.500-2-1z" fill="#d9c8a0"/><path d="M8 1.500h14" stroke="#eee" stroke-width="2" stroke-dasharray="1 1"/></svg><div class="mt-auto w-[35px] h-[2px] bg-[#f5b3ae]"></div></div>
  <svg class="ml-[26px] w-[22px] h-[16px]" viewBox="0 0 22 16"><path d="M4.500 15.500a4.300 4.300 0 0 1-.3-8.600A7 7 0 0 1 17.500 5a5.400 5.400 0 0 1-1 10.500z" fill="url(#gCloud)"/></svg>
  <span class="ml-[9px] w-[47px] text-[14px] tracking-[-0.45px]">34°C</span>
  <svg class="w-[12px] h-[7px]"><use href="#chev"/></svg>
  <svg class="ml-[10px] w-[16px] h-[14px]"><use href="#net"/></svg>
  <svg class="ml-[10px] w-[12px] h-[16px]"><use href="#meet"/></svg>
  <svg class="ml-[10px] w-[17px] h-[14px]"><use href="#vol"/></svg>
  <svg class="ml-[7px] w-[23px] h-[14px]" viewBox="0 0 23 14"><path d="M.5.5h22v13H.5z" fill="none" stroke="#fff"/><path d="M3 4h17M3 7h17" stroke="#fff" stroke-width="1.500" stroke-dasharray="1.500 1.100"/><path d="M3 10.500h2M7 10.500h9M18 10.500h2" stroke="#fff" stroke-width="1.300"/></svg>
  <span class="ml-[11px] w-[33px] text-[12px] tracking-[-0.5px]">ENG</span>
  <div class="w-[64px] text-center text-[12px] leading-[18px] tracking-[-0.65px]">03:01 PM<br>09-06-2022</div>
  <div class="relative ml-[15px] w-[26px] h-[24px] pt-[4px]">
    <svg class="w-[17px] h-[16px]" viewBox="0 0 17 16"><path d="M0 0h17v12H6l-3 3.500V12H0z" fill="#fff"/><path d="M3 3.500h11M3 6h11M3 8.500h7" stroke="#444a3c" stroke-width="1"/></svg>
    <div class="absolute left-[7px] top-[10px] w-[18px] h-[18px] rounded-full bg-[#333a2e] border border-[#aaa] text-center text-[11px] leading-[16px] font-semibold tracking-[-0.3px]">15</div>
  </div>
  <div class="ml-auto mr-[4px] w-px h-full bg-[#8a8f84]"></div>
</footer>
</div>
</body>
</html>
